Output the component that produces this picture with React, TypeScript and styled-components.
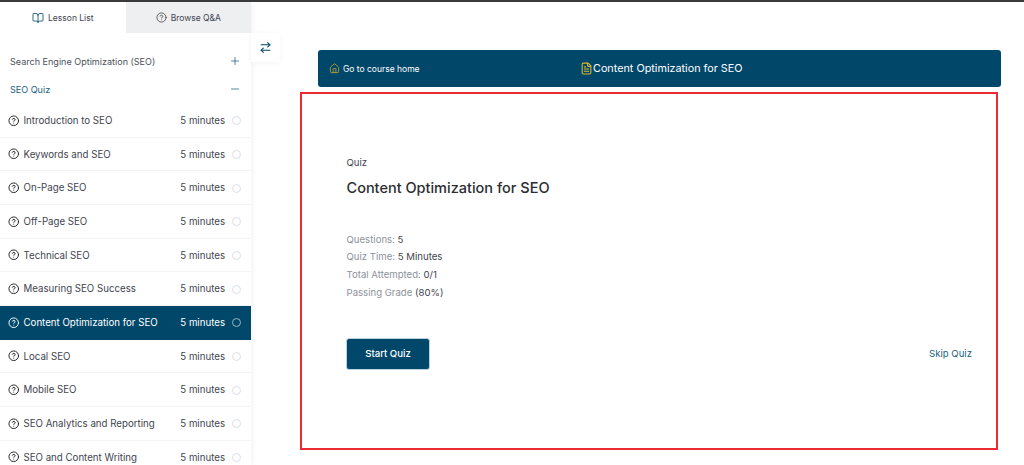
import React from "react";
import styled, { createGlobalStyle } from "styled-components";
import { BookOpen, CircleHelp, ArrowRightLeft, Plus, Minus, House, FileText } from "lucide-react";

const Global = createGlobalStyle`
  html, body { margin: 0; padding: 0; height: 465px; overflow: hidden; background: #fff; }
  body { font-family: Inter, "Liberation Sans", sans-serif; color: #212327; }
  * { box-sizing: border-box; }
`;
const Page = styled.div`
  width: 1024px; height: 465px; overflow: hidden; border-top: 2px solid #3a3a3a;
  display: flex; position: relative;
`;
const Sidebar = styled.aside`
  width: 251px; flex: none; height: 463px; overflow: hidden; background: #fff;
  box-shadow: 1px 0 6px rgba(0,0,0,.06);
`;
const Tabs = styled.div` display: flex; height: 31px; `;
const Tab = styled.div<{ $active?: boolean }>`
  flex: 1; display: flex; align-items: center; justify-content: center; gap: 4px;
  font-size: 8.5px; color: #41454f; background: ${p => (p.$active ? "#fff" : "#eeeff1")};
  svg { color: ${p => (p.$active ? "#00476a" : "#333")}; }
`;
const Topic = styled.div<{ $open?: boolean; $first?: boolean }>`
  display: flex; align-items: center; justify-content: space-between; height: 28px;
  margin-top: ${p => (p.$first ? "14px" : "0")};
  padding: 0 10px 0 10px; font-size: 9.05px; color: ${p => (p.$open ? "#1b5f80" : "#4e525c")};
  svg { color: #1b5f80; }
`;
const Lessons = styled.div` padding-top: 1px; `;
const Lesson = styled.div<{ $active?: boolean }>`
  height: 33.68px; display: flex; align-items: center; padding: 0 10px 0 7.5px;
  font-size: 9.7px; color: ${p => (p.$active ? "#fff" : "#41454f")};
  background: ${p => (p.$active ? "#00476a" : "#fff")};
  border-bottom: 1px solid ${p => (p.$active ? "#00476a" : "#f3f4f5")};
`;
const LessonIcon = styled.span<{ $active?: boolean }>`
  display: flex; margin-right: 4.5px; color: ${p => (p.$active ? "#fff" : "#212327")};
`;
const LessonTitle = styled.span` flex: 1; white-space: nowrap; `;
const Duration = styled.span` margin-right: 7px; white-space: nowrap; `;
const Radio = styled.span<{ $active?: boolean }>`
  width: 9px; height: 9px; border-radius: 50%; flex: none; margin-top: 1px;
  border: 1px solid ${p => (p.$active ? "#9db4c0" : "#dcdee2")};
`;
const Toggle = styled.div`
  position: absolute; left: 251px; top: 31px; width: 29px; height: 29px; background: #fff;
  display: flex; align-items: center; justify-content: center; color: #00476a;
  box-shadow: 0 1px 6px rgba(0,0,0,.05);
`;
const Main = styled.main`
  flex: 1; padding: 48px 23px 0 49px; display: flex; flex-direction: column;
`;
const Banner = styled.div`
  width: 683px; margin-left: 18px; height: 37px; flex: none; background: #00476a; border-radius: 3px;
  display: flex; align-items: center; padding: 0 11px; color: #fff;
`;
const HomeLink = styled.div`
  display: flex; align-items: center; gap: 3px; font-size: 8.5px; width: 250.5px; flex: none;
  svg { color: #d2a92e; }
`;
const BannerTitle = styled.div`
  display: flex; align-items: center; gap: 0.5px; font-size: 10.8px;
  svg { color: #e0b52e; }
`;
const Highlight = styled.section`
  width: 698px; height: 358px; margin-top: 5px; border: 2px solid #ed2a32;
  padding: 62.5px 24px 0 44.5px; display: flex; flex-direction: column;
`;
const Kicker = styled.div` font-size: 9.6px; line-height: 12px; color: #41454f; `;
const Heading = styled.h1`
  margin: 9px 0 0; font-size: 14.5px; line-height: 20px; font-weight: 500; color: #2b2d31;
`;
const Meta = styled.div` margin-top: 33px; display: flex; flex-direction: column; `;
const MetaRow = styled.div`
  font-size: 9.6px; line-height: 17.8px; color: #41454f;
`;
const MetaLabel = styled.span` color: #8d919b; `;
const Actions = styled.div`
  margin-top: 36px; display: flex; align-items: center; justify-content: space-between;
`;
const StartButton = styled.button`
  width: 84px; height: 32px; margin-left: -0.5px; border: 1px solid #b7d3df; border-radius: 3px; background: #00476a;
  color: #fff; font: 500 9.6px Inter, "Liberation Sans", sans-serif; padding: 0;
`;
const SkipLink = styled.a` font-size: 9.6px; color: #1b5f80; `;

const lessons = [
  "Introduction to SEO", "Keywords and SEO", "On-Page SEO", "Off-Page SEO", "Technical SEO",
  "Measuring SEO Success", "Content Optimization for SEO", "Local SEO", "Mobile SEO",
  "SEO Analytics and Reporting", "SEO and Content Writing",
];

export default function App() {
  return (
    <Page>
      <Global />
      <Sidebar>
        <Tabs>
          <Tab $active><BookOpen size={12} strokeWidth={1.6} />Lesson List</Tab>
          <Tab><CircleHelp size={11} strokeWidth={1.6} />Browse Q&amp;A</Tab>
        </Tabs>
        <Topic $first>Search Engine Optimization (SEO)<Plus size={12} strokeWidth={1.5} /></Topic>
        <Topic $open>SEO Quiz<Minus size={12} strokeWidth={1.5} /></Topic>
        <Lessons>
          {lessons.map((l, i) => {
            const active = i === 6;
            return (
              <Lesson key={l} $active={active}>
                <LessonIcon $active={active}><CircleHelp size={11.5} strokeWidth={2} /></LessonIcon>
                <LessonTitle>{l}</LessonTitle>
                <Duration>5 minutes</Duration>
                <Radio $active={active} />
              </Lesson>
            );
          })}
        </Lessons>
      </Sidebar>
      <Toggle><ArrowRightLeft size={13} strokeWidth={2} /></Toggle>
      <Main>
        <Banner>
          <HomeLink><House size={11} strokeWidth={1.7} />Go to course home</HomeLink>
          <BannerTitle><FileText size={13} strokeWidth={2} />Content Optimization for SEO</BannerTitle>
        </Banner>
        <Highlight>
          <Kicker>Quiz</Kicker>
          <Heading>Content Optimization for SEO</Heading>
          <Meta>
            <MetaRow><MetaLabel>Questions:</MetaLabel> 5</MetaRow>
            <MetaRow><MetaLabel>Quiz Time:</MetaLabel> 5 Minutes</MetaRow>
            <MetaRow><MetaLabel>Total Attempted:</MetaLabel> 0/1</MetaRow>
            <MetaRow><MetaLabel>Passing Grade</MetaLabel> (80%)</MetaRow>
          </Meta>
          <Actions>
            <StartButton>Start Quiz</StartButton>
            <SkipLink>Skip Quiz</SkipLink>
          </Actions>
        </Highlight>
      </Main>
    </Page>
  );
}
